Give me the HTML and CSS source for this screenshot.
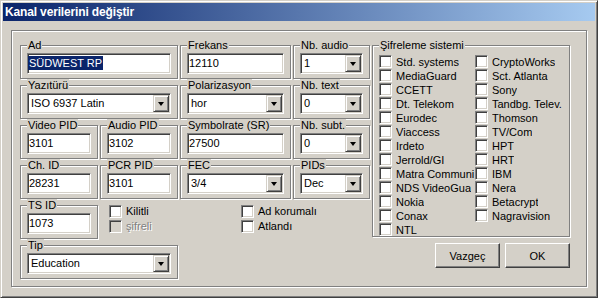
FILE: index.html
```html
<!DOCTYPE html>
<html lang="tr">
<head>
  <meta charset="UTF-8" />
  <title>Kanal verilerini değiştir</title>
  <link rel="stylesheet" href="styles.css" />
</head>
<body>
  <div class="window">
    <div class="titlebar">Kanal verilerini değiştir</div>

    <div class="panel">
      <!-- Sol taraf: kanal alanları -->
      <div class="left">
        <div class="group span2">
          <div class="cap">Ad</div>
          <div class="field"><span class="sel">SÜDWEST RP</span></div>
        </div>
        <div class="group">
          <div class="cap">Frekans</div>
          <div class="field">12110</div>
        </div>
        <div class="group">
          <div class="cap">Nb. audio</div>
          <div class="combo"><span class="val">1</span><span class="drop"></span></div>
        </div>

        <div class="group span2">
          <div class="cap">Yazıtürü</div>
          <div class="combo"><span class="val">ISO 6937 Latin</span><span class="drop"></span></div>
        </div>
        <div class="group">
          <div class="cap">Polarizasyon</div>
          <div class="combo"><span class="val">hor</span><span class="drop"></span></div>
        </div>
        <div class="group">
          <div class="cap">Nb. text</div>
          <div class="combo"><span class="val">0</span><span class="drop"></span></div>
        </div>

        <div class="group">
          <div class="cap">Video PID</div>
          <div class="field">3101</div>
        </div>
        <div class="group">
          <div class="cap">Audio PID</div>
          <div class="field">3102</div>
        </div>
        <div class="group">
          <div class="cap">Symbolrate (SR)</div>
          <div class="field">27500</div>
        </div>
        <div class="group">
          <div class="cap">Nb. subt.</div>
          <div class="combo"><span class="val">0</span><span class="drop"></span></div>
        </div>

        <div class="group">
          <div class="cap">Ch. ID</div>
          <div class="field">28231</div>
        </div>
        <div class="group">
          <div class="cap">PCR PID</div>
          <div class="field">3101</div>
        </div>
        <div class="group">
          <div class="cap">FEC</div>
          <div class="combo"><span class="val">3/4</span><span class="drop"></span></div>
        </div>
        <div class="group">
          <div class="cap">PIDs</div>
          <div class="combo"><span class="val">Dec</span><span class="drop"></span></div>
        </div>

        <div class="group">
          <div class="cap">TS ID</div>
          <div class="field">1073</div>
        </div>
        <div class="checks checks-a">
          <div class="check"><span class="box"></span>Kilitli</div>
          <div class="check disabled"><span class="box"></span>şifreli</div>
        </div>
        <div class="checks checks-b">
          <div class="check"><span class="box"></span>Ad korumalı</div>
          <div class="check"><span class="box"></span>Atlandı</div>
        </div>

        <div class="group tip">
          <div class="cap">Tip</div>
          <div class="combo"><span class="val">Education</span><span class="drop"></span></div>
        </div>
      </div>

      <!-- Sağ taraf: şifreleme sistemleri ve butonlar -->
      <div class="right">
        <div class="group sifre">
          <div class="cap">Şifreleme sistemi</div>
          <div class="sifre-list">
            <div class="check"><span class="box"></span><span class="txt">Std. systems</span></div>
            <div class="check"><span class="box"></span><span class="txt">MediaGuard</span></div>
            <div class="check"><span class="box"></span><span class="txt">CCETT</span></div>
            <div class="check"><span class="box"></span><span class="txt">Dt. Telekom</span></div>
            <div class="check"><span class="box"></span><span class="txt">Eurodec</span></div>
            <div class="check"><span class="box"></span><span class="txt">Viaccess</span></div>
            <div class="check"><span class="box"></span><span class="txt">Irdeto</span></div>
            <div class="check"><span class="box"></span><span class="txt">Jerrold/GI</span></div>
            <div class="check"><span class="box"></span><span class="txt">Matra Communi</span></div>
            <div class="check"><span class="box"></span><span class="txt">NDS VideoGua</span></div>
            <div class="check"><span class="box"></span><span class="txt">Nokia</span></div>
            <div class="check"><span class="box"></span><span class="txt">Conax</span></div>
            <div class="check"><span class="box"></span><span class="txt">NTL</span></div>
            <div class="check"><span class="box"></span><span class="txt">CryptoWorks</span></div>
            <div class="check"><span class="box"></span><span class="txt">Sct. Atlanta</span></div>
            <div class="check"><span class="box"></span><span class="txt">Sony</span></div>
            <div class="check"><span class="box"></span><span class="txt">Tandbg. Telev.</span></div>
            <div class="check"><span class="box"></span><span class="txt">Thomson</span></div>
            <div class="check"><span class="box"></span><span class="txt">TV/Com</span></div>
            <div class="check"><span class="box"></span><span class="txt">HPT</span></div>
            <div class="check"><span class="box"></span><span class="txt">HRT</span></div>
            <div class="check"><span class="box"></span><span class="txt">IBM</span></div>
            <div class="check"><span class="box"></span><span class="txt">Nera</span></div>
            <div class="check"><span class="box"></span><span class="txt">Betacrypt</span></div>
            <div class="check"><span class="box"></span><span class="txt">Nagravision</span></div>
          </div>
        </div>

        <div class="buttons">
          <button type="button" class="btn">Vazgeç</button>
          <button type="button" class="btn">OK</button>
        </div>
      </div>
    </div>
  </div>
</body>
</html>
```

FILE: styles.css
```css
/* =====================
  Genel
====================== */

* {
  box-sizing: border-box;
}

body {
  margin: 0;
  background-color: #d4d0c8;
  font-family: "Liberation Sans", Arial, sans-serif;
  font-size: 11px;
  color: #000;
}

/* Pencere çerçevesi */
.window {
  width: 598px;
  height: 298px;
  padding: 2px;
  border: 1px solid;
  border-color: #d4d0c8 #404040 #404040 #d4d0c8;
  box-shadow: inset 1px 1px 0 #fff, inset -1px -1px 0 #808080;
  background-color: #d4d0c8;
}

/* Başlık çubuğu (degrade) */
.titlebar {
  height: 18px;
  line-height: 18px;
  padding-left: 2px;
  background: linear-gradient(to right, #0a246a, #a6caf0);
  color: #fff;
  font-weight: bold;
  font-size: 12px;
  letter-spacing: -0.15px;
  white-space: nowrap;
}

/* =====================
  Ana panel
====================== */

.panel {
  width: 576px;
  height: 257px;
  margin: 9px 0 0 8px;
  padding: 14px 0 0 8px;
  border: 1px solid #808080;
  box-shadow: inset 1px 1px 0 #fff, 1px 1px 0 #fff;
  display: flex;
  gap: 2px;
}

.left {
  width: 350px;
  display: grid;
  grid-template-columns: 78px 78px 111px 77px;
  grid-template-rows: repeat(6, 34px);
  gap: 6px 2px;
}

.right {
  width: 198px;
  display: flex;
  flex-direction: column;
}

/* =====================
  Grup kutuları (etched)
====================== */

.group {
  border: 1px solid #808080;
  box-shadow: inset 1px 1px 0 #fff, 1px 1px 0 #fff;
  padding: 0 6px;
  display: flex;
  flex-direction: column;
}

.span2 {
  grid-column: span 2;
}

.tip {
  grid-column: 1 / span 2;
}

.cap {
  align-self: flex-start;
  margin-top: -7px;
  padding: 0 1px;
  height: 13px;
  line-height: 13px;
  background-color: #d4d0c8;
  white-space: nowrap;
}

/* Metin kutusu (sunken) */
.field {
  margin-top: 1px;
  height: 21px;
  padding: 1px 1px;
  line-height: 17px;
  border: 1px solid;
  border-color: #808080 #fff #fff #808080;
  box-shadow: inset 1px 1px 0 #404040, inset -1px -1px 0 #d4d0c8;
  background-color: #fff;
  white-space: nowrap;
  overflow: hidden;
}

.sel {
  display: inline-block;
  line-height: 14px;
  padding: 0 1px;
  margin-left: -1px;
  background-color: #0a246a;
  color: #fff;
}

/* Açılır liste */
.combo {
  margin-top: 1px;
  height: 21px;
  padding: 1px;
  border: 1px solid;
  border-color: #808080 #fff #fff #808080;
  box-shadow: inset 1px 1px 0 #404040, inset -1px -1px 0 #d4d0c8;
  background-color: #fff;
  display: flex;
}

.combo .val {
  flex: 1;
  padding-left: 2px;
  line-height: 17px;
  white-space: nowrap;
  overflow: hidden;
}

.drop {
  width: 16px;
  height: 17px;
  border: 1px solid;
  border-color: #d4d0c8 #404040 #404040 #d4d0c8;
  box-shadow: inset 1px 1px 0 #fff, inset -1px -1px 0 #808080;
  background-color: #d4d0c8;
  display: flex;
  align-items: center;
  justify-content: center;
}

.drop::after {
  content: "";
  border-top: 4px solid #000;
  border-left: 3.5px solid transparent;
  border-right: 3.5px solid transparent;
}

/* =====================
  Onay kutuları
====================== */

.checks {
  display: flex;
  flex-direction: column;
  gap: 2px;
}

.checks-a {
  padding-left: 9px;
}

.checks-b {
  grid-column: 3;
  padding-left: 61px;
}

.check {
  display: flex;
  align-items: center;
  height: 13px;
  line-height: 13px;
  white-space: nowrap;
}

.box {
  flex: none;
  width: 13px;
  height: 13px;
  margin-right: 4px;
  border: 1px solid;
  border-color: #808080 #fff #fff #808080;
  box-shadow: inset 1px 1px 0 #404040, inset -1px -1px 0 #d4d0c8;
  background-color: #fff;
}

.check.disabled {
  color: #808080;
  text-shadow: 1px 1px 0 #fff;
}

.check.disabled .box {
  background-color: #d4d0c8;
}

/* Şifreleme listesi */
.sifre {
  height: 192px;
}

.sifre-list {
  margin-top: 3px;
  display: grid;
  grid-auto-flow: column;
  grid-template-rows: repeat(13, 13px);
  grid-template-columns: 96px 96px;
  row-gap: 1px;
}

.sifre-list .txt {
  max-width: 79px;
  overflow: hidden;
  padding-top: 1px;
}

/* =====================
  Butonlar
====================== */

.buttons {
  display: flex;
  justify-content: flex-end;
  gap: 5px;
  margin-top: 6px;
}

.btn {
  width: 65px;
  height: 25px;
  padding: 0;
  font-family: "Liberation Sans", Arial, sans-serif;
  font-size: 11px;
  color: #000;
  background-color: #d4d0c8;
  border: 1px solid;
  border-color: #fff #404040 #404040 #fff;
  box-shadow: inset -1px -1px 0 #808080;
  border-radius: 0;
}
```
